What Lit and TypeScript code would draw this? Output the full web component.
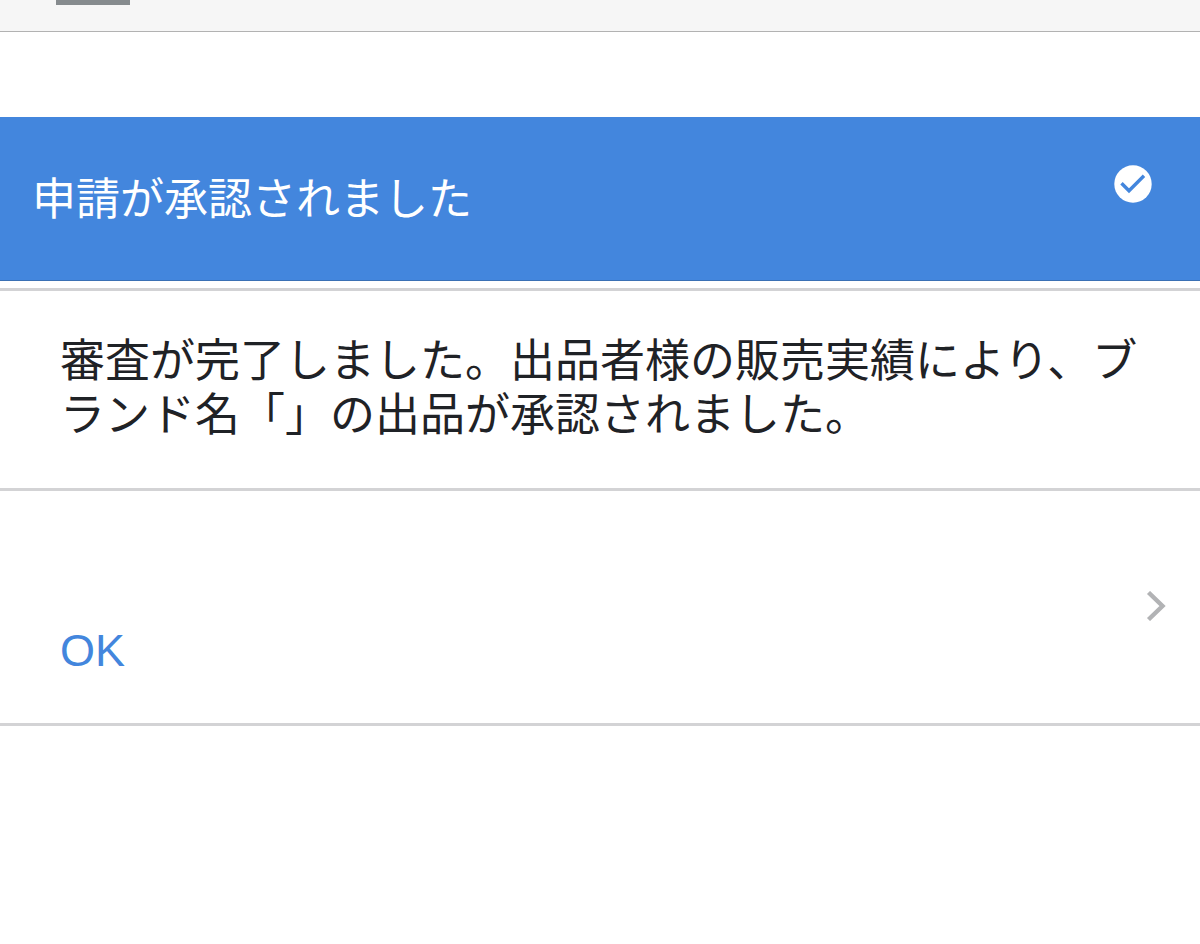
import { LitElement, html, css } from "lit";
import { customElement } from "lit/decorators.js";

@customElement("app-root")
export class AppRoot extends LitElement {
  static styles = css`
    :host {
      display: block;
      min-height: 100vh;
      background: #fff;
      color: #1f2226;
      font-family: "Liberation Sans", "Noto Sans CJK JP", sans-serif;
      font-size: 45px;
      line-height: 54px;
    }
    .toolbar {
      box-sizing: border-box;
      height: 32px;
      padding-left: 56px;
      background: #f6f6f6;
      border-bottom: 1px solid #b2b2b2;
    }
    .tab {
      width: 74px;
      height: 5px;
      background: #868b8e;
    }
    .banner {
      box-sizing: border-box;
      display: flex;
      align-items: flex-start;
      justify-content: space-between;
      margin-top: 85px;
      min-height: 164px;
      padding: 48px 48px 48px 32px;
      background: #4386dd;
      border-bottom: 1px solid #3a70b4;
      color: #fff;
    }
    h1 {
      margin: 8px 0 0;
      font: inherit;
      font-size: 44px;
    }
    .check {
      flex: none;
      width: 38px;
      height: 38px;
    }
    .message {
      margin: 7px 0 0;
      padding: 44px 60px 45px;
      border-top: 3px solid #d3d3d5;
      border-bottom: 3px solid #d3d3d5;
    }
    .row {
      box-sizing: border-box;
      display: flex;
      align-items: center;
      justify-content: space-between;
      width: 100%;
      min-height: 235px;
      padding: 88px 34px 0 60px;
      border: 0;
      border-bottom: 3px solid #d3d3d5;
      background: none;
      color: #4386dd;
      font: inherit;
      text-align: left;
      cursor: pointer;
    }
    .chevron {
      flex: none;
      width: 20px;
      height: 30px;
      margin-bottom: 90px;
    }
  `;

  render() {
    return html`
      <header class="toolbar"><div class="tab"></div></header>
      <main>
        <section class="banner">
          <h1>申請が承認されました</h1>
          <svg class="check" viewBox="0 0 38 38" aria-hidden="true">
            <circle cx="19" cy="19" r="18.7" fill="#fff" />
            <path d="M7.5 18.3 15 25.8 30 10.8" fill="none" stroke="#4386dd" stroke-width="3.4" />
          </svg>
        </section>
        <p class="message">審査が完了しました。出品者様の販売実績により、ブランド名「」の出品が承認されました。</p>
        <button class="row" type="button">
          <span>OK</span>
          <svg class="chevron" viewBox="0 0 20 30" aria-hidden="true">
            <path d="M2.5 1.5 16.5 15 2.5 28.5" fill="none" stroke="#b2b3b5" stroke-width="4.4" />
          </svg>
        </button>
      </main>
    `;
  }
}
